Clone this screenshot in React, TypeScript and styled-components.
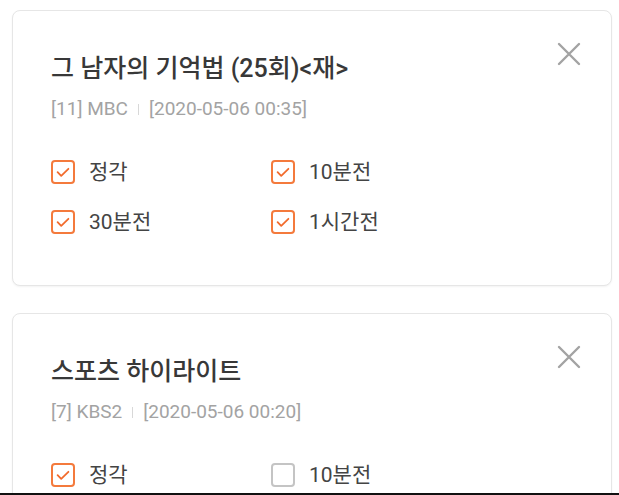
import styled, { createGlobalStyle } from "styled-components";

const GlobalStyle = createGlobalStyle`
  html, body {
    margin: 0;
    padding: 0;
    background: #ffffff;
    font-family: Roboto, "Noto Sans CJK KR", sans-serif;
  }
`;

type Alarm = { label: string; checked: boolean };
type Program = {
  title: string;
  channel: string;
  time: string;
  alarms: Alarm[];
};

const programs: Program[] = [
  {
    title: "그 남자의 기억법 (25회)<재>",
    channel: "[11] MBC",
    time: "[2020-05-06 00:35]",
    alarms: [
      { label: "정각", checked: true },
      { label: "10분전", checked: true },
      { label: "30분전", checked: true },
      { label: "1시간전", checked: true },
    ],
  },
  {
    title: "스포츠 하이라이트",
    channel: "[7] KBS2",
    time: "[2020-05-06 00:20]",
    alarms: [
      { label: "정각", checked: true },
      { label: "10분전", checked: false },
      { label: "30분전", checked: false },
      { label: "1시간전", checked: false },
    ],
  },
];

function CloseIcon() {
  return (
    <svg width="24" height="24" viewBox="0 0 24 24">
      <path
        d="M2 2 L22 22 M22 2 L2 22"
        stroke="#a3a3a3"
        strokeWidth="2.4"
        strokeLinecap="round"
        fill="none"
      />
    </svg>
  );
}

function App() {
  return (
    <Page>
      <GlobalStyle />
      {programs.map((p) => (
        <Card key={p.title}>
          <Header>
            <Title>{p.title}</Title>
            <CloseButton>
              <CloseIcon />
            </CloseButton>
          </Header>
          <Meta>
            {p.channel}
            <Divider />
            {p.time}
          </Meta>
          <AlarmGrid>
            {p.alarms.map((a) => (
              <AlarmItem key={a.label}>
                <Box $checked={a.checked}>
                  {a.checked && (
                    <svg width="14" height="11" viewBox="0 0 14 11">
                      <path
                        d="M1.6 5.2 L5.2 8.8 L12.4 1.8"
                        stroke="#f26b2c"
                        strokeWidth="1.8"
                        strokeLinecap="round"
                        strokeLinejoin="round"
                        fill="none"
                      />
                    </svg>
                  )}
                </Box>
                <Label>{a.label}</Label>
              </AlarmItem>
            ))}
          </AlarmGrid>
        </Card>
      ))}
      <BottomEdge />
    </Page>
  );
}

export default App;

const Page = styled.div`
  display: flex;
  flex-direction: column;
  gap: 27px;
  padding: 10px 7px 0 12px;
  height: 495px;
  box-sizing: border-box;
  overflow: hidden;
`;

const Card = styled.div`
  flex-shrink: 0;
  height: 276px;
  box-sizing: border-box;
  padding: 43px 30px 0 38px;
  border: 1px solid #e6e6e6;
  border-radius: 8px;
  box-shadow: 0 1px 2px rgba(0, 0, 0, 0.05);
  background: #fff;
`;

const Header = styled.div`
  display: flex;
  justify-content: space-between;
  align-items: flex-start;
`;

const Title = styled.h2`
  margin: 0;
  font-family: Roboto, "Noto Sans CJK KR", sans-serif;
  font-size: 25px;
  font-weight: 500;
  line-height: 30px;
  color: #383838;
`;

const CloseButton = styled.div`
  display: flex;
  margin-top: -12px;
`;

const Meta = styled.div`
  display: flex;
  align-items: center;
  margin-top: 14px;
  font-size: 19px;
  line-height: 22px;
  color: #a3a3a3;
`;

const Divider = styled.span`
  display: inline-block;
  width: 1px;
  height: 11px;
  margin: 0 10px;
  background: #d8d8d8;
`;

const AlarmGrid = styled.div`
  display: grid;
  grid-template-columns: 220px 220px;
  row-gap: 26px;
  margin-top: 40px;
`;

const AlarmItem = styled.div`
  display: flex;
  align-items: center;
  gap: 14px;
`;

const Box = styled.div<{ $checked: boolean }>`
  width: 24px;
  height: 24px;
  box-sizing: border-box;
  border: 2px solid ${(p) => (p.$checked ? "#f47a3c" : "#c4c4c4")};
  border-radius: 4px;
  display: flex;
  align-items: center;
  justify-content: center;
`;

const Label = styled.span`
  font-size: 21px;
  line-height: 24px;
  color: #444;
`;

const BottomEdge = styled.div`
  position: fixed;
  left: 0;
  right: 0;
  bottom: 0;
  height: 2px;
  background: #111;
`;
